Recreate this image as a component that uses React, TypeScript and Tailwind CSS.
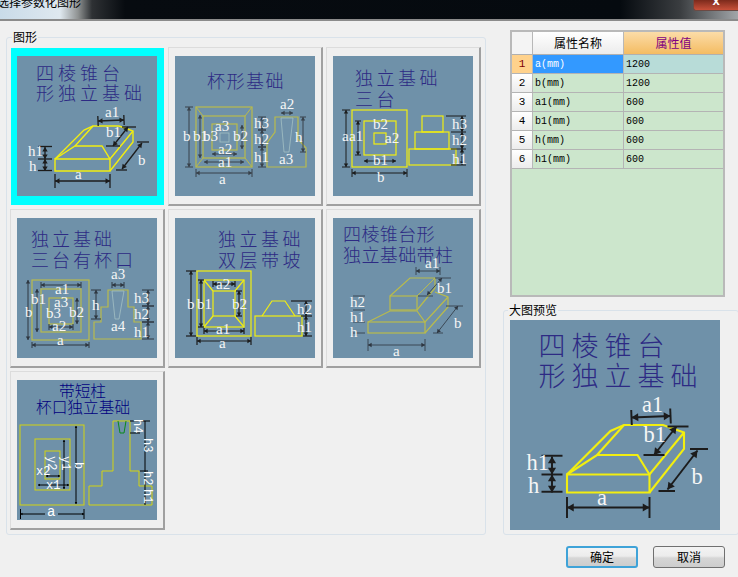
import React from "react";

type Pt = [number, number];

const Lb = ({ x, y, t, s = 15 }: { x: number; y: number; t: string; s?: number }) => (
  <text x={x} y={y} fontSize={s} fill="#f6f6f6" className="font-['Liberation_Serif',serif]">{t}</text>
);

const Ti = ({ x, y, t, adv, s = 18, c = "#2d2a84" }: { x: number; y: number; t: string; adv: number; s?: number; c?: string }) => (
  <text x={x} y={y} fontSize={s} fill={c} letterSpacing={adv - s} fontWeight={300} className="font-['Noto_Sans_CJK_SC',sans-serif]">{t}</text>
);

const Poly = ({ p, c, w = 1.2, fill = "none", open = false }: { p: Pt[]; c: string; w?: number; fill?: string; open?: boolean }) => {
  const pts = p.map((q) => q.join(",")).join(" ");
  return open ? <polyline points={pts} fill={fill} stroke={c} strokeWidth={w} /> : <polygon points={pts} fill={fill} stroke={c} strokeWidth={w} />;
};

const Box = ({ a, b, c, d, k, w = 1.2 }: { a: number; b: number; c: number; d: number; k: string; w?: number }) => (
  <rect x={a} y={b} width={c - a} height={d - b} fill="none" stroke={k} strokeWidth={w} />
);

const Ln = ({ a, b, c, d, k = "#1c1c1c", w = 1 }: { a: number; b: number; c: number; d: number; k?: string; w?: number }) => (
  <line x1={a} y1={b} x2={c} y2={d} stroke={k} strokeWidth={w} />
);

const Dim = ({ a, b, c, d, k = "#1c1c1c", w = 1, h = 3.6, ticks = 0 }: { a: number; b: number; c: number; d: number; k?: string; w?: number; h?: number; ticks?: number }) => {
  const len = Math.hypot(c - a, d - b) || 1;
  const ux = (c - a) / len;
  const uy = (d - b) / len;
  const nx = -uy;
  const ny = ux;
  const tri = (x: number, y: number, dx: number, dy: number) =>
    `${x},${y} ${x - dx * h + nx * h * 0.6},${y - dy * h + ny * h * 0.6} ${x - dx * h - nx * h * 0.6},${y - dy * h - ny * h * 0.6}`;
  return (
    <g>
      <line x1={a} y1={b} x2={c} y2={d} stroke={k} strokeWidth={w} />
      <polygon points={tri(a, b, -ux, -uy)} fill={k} />
      <polygon points={tri(c, d, ux, uy)} fill={k} />
      {ticks > 0 && (
        <>
          <line x1={a - nx * ticks} y1={b - ny * ticks} x2={a + nx * ticks} y2={b + ny * ticks} stroke={k} strokeWidth={w} />
          <line x1={c - nx * ticks} y1={d - ny * ticks} x2={c + nx * ticks} y2={d + ny * ticks} stroke={k} strokeWidth={w} />
        </>
      )}
    </g>
  );
};

const Y = "#f2ee10";
const OL = "#b9bb4c";
const PALE = "#a3c0c4";

const D1 = () => (
  <>
    <Ti x={19} y={24} t="四棱锥台" adv={22} />
    <Ti x={19} y={44} t="形独立基础" adv={22} />
    <Poly c={Y} w={1.4} p={[[38, 103], [93, 103], [93, 115], [38, 115]]} />
    <Poly c={Y} w={1.4} open p={[[38, 103], [67, 74], [76, 70], [102, 70], [116, 75], [116, 86], [93, 115]]} />
    <Poly c={Y} w={1.4} open p={[[38, 103], [58, 90], [85, 90], [93, 103], [116, 75]]} />
    <Ln k={Y} w={1.4} a={58} b={90} c={76} d={70} />
    <Dim a={38} b={125} c={93} d={125} ticks={7} w={1.3} h={4.5} />
    <Dim a={81} b={65} c={107} d={64} w={1.3} h={4.5} ticks={5} />
    <Dim a={96} b={90} c={111} d={71} w={1.3} h={4.5} />
    <Ln a={105} b={71} c={119} d={71} w={1.3} />
    <Ln a={89} b={90} c={103} d={90} w={1.3} />
    <Dim a={105} b={113} c={125} d={87} w={1.3} h={4.5} />
    <Ln a={99} b={114} c={110} d={114} w={1.3} />
    <Ln a={120} b={86} c={132} d={86} w={1.3} />
    <Dim a={28} b={91} c={28} d={103} w={1.3} h={4.5} />
    <Dim a={28} b={103} c={28} d={115} w={1.3} h={4.5} />
    <Ln a={21} b={90.5} c={35} d={90.5} w={1.3} />
    <Ln a={21} b={103} c={35} d={103} w={1.3} />
    <Ln a={21} b={114.5} c={35} d={114.5} w={1.3} />
    <Lb x={88} y={61} t="a1" />
    <Lb x={89} y={81} t="b1" />
    <Lb x={121} y={109} t="b" />
    <Lb x={11} y={100} t="h1" />
    <Lb x={12} y={115} t="h" />
    <Lb x={58} y={123} t="a" />
  </>
);

const D2 = () => (
  <>
    <Ti x={32} y={32} t="杯形基础" adv={19.5} />
    <Box a={21} b={51} c={77} d={111} k={OL} />
    <Box a={28} b={60} c={70} d={102} k={OL} />
    <Box a={37} b={68} c={62} d={94} k={OL} />
    <Box a={45} b={77} c={54} d={86} k={PALE} w={0.8} />
    <Ln k={OL} a={21} b={51} c={28} d={60} />
    <Ln k={OL} a={77} b={51} c={70} d={60} />
    <Ln k={OL} a={21} b={111} c={28} d={102} />
    <Ln k={OL} a={77} b={111} c={70} d={102} />
    <Poly c={OL} p={[[100, 61], [123, 61], [123, 83], [131, 92], [131, 111], [92, 111], [92, 87], [100, 76]]} />
    <Poly c={PALE} w={0.8} p={[[106, 62], [118, 62], [114, 96], [109, 96]]} />
    <Dim k="#38414a" a={14} b={51} c={14} d={111} ticks={4} />
    <Dim k="#38414a" a={25} b={59} c={25} d={102} />
    <Dim k="#38414a" a={21} b={117} c={77} d={117} ticks={4} />
    <Dim k="#38414a" a={29} b={106} c={69} d={106} />
    <Dim k="#38414a" a={37} b={98} c={62} d={98} />
    <Dim k="#38414a" a={67} b={69} c={67} d={93} />
    <Dim k="#38414a" a={87} b={61} c={87} d={74} ticks={4} />
    <Dim k="#38414a" a={87} b={74} c={87} d={91} ticks={4} />
    <Dim k="#38414a" a={87} b={91} c={87} d={111} ticks={4} />
    <Dim k="#38414a" a={128} b={61} c={128} d={96} ticks={3} />
    <Dim k="#38414a" a={106} b={57} c={118} d={57} />
    <Lb x={105} y={53} t="a2" />
    <Lb x={79} y={72} t="h3" />
    <Lb x={79} y={88} t="h2" />
    <Lb x={79} y={106} t="h1" />
    <Lb x={120} y={86} t="h" />
    <Lb x={104} y={108} t="a3" />
    <Lb x={44} y={128} t="a" />
    <Lb x={43} y={111} t="a1" />
    <Lb x={43} y={98} t="a2" />
    <Lb x={40} y={75} t="a3" />
    <Lb x={8} y={85} t="b" />
    <Lb x={18} y={85} t="b1" />
    <Lb x={28} y={85} t="b3" />
    <Lb x={58} y={85} t="b2" />
  </>
);

const D3 = () => (
  <>
    <Ti x={22} y={29} t="独立基础" adv={21.5} />
    <Ti x={22} y={50} t="三台" adv={21.5} />
    <Box a={19} b={54} c={74} d={111} k={Y} />
    <Box a={31} b={65} c={63} d={99} k={Y} />
    <Box a={41} b={77} c={53} d={88} k={Y} />
    <Box a={89} b={60} c={110} d={76} k={Y} />
    <Box a={82} b={76} c={116} d={93} k={Y} />
    <Box a={76} b={93} c={123} d={109} k={Y} />
    <Dim a={13} b={54} c={13} d={111} ticks={4} />
    <Dim a={25} b={65} c={25} d={99} ticks={3} />
    <Dim a={19} b={117} c={74} d={117} ticks={4} />
    <Dim a={31} b={105} c={63} d={105} />
    <Dim a={129} b={60} c={129} d={76} />
    <Dim a={129} b={76} c={129} d={93} />
    <Dim a={129} b={93} c={129} d={109} />
    <Ln a={113} b={60} c={133} d={60} />
    <Ln a={118} b={76} c={133} d={76} />
    <Ln a={118} b={93} c={133} d={93} />
    <Ln a={118} b={109} c={133} d={109} />
    <Lb x={9} y={85} t="a" />
    <Lb x={16} y={85} t="a1" />
    <Lb x={40} y={73} t="b2" />
    <Lb x={52} y={87} t="a2" />
    <Lb x={40} y={109} t="b1" />
    <Lb x={44} y={126} t="b" />
    <Lb x={119} y={73} t="h3" />
    <Lb x={119} y={89} t="h2" />
    <Lb x={119} y={108} t="h1" />
  </>
);

const D4 = () => (
  <>
    <Ti x={14} y={28} t="独立基础" adv={21} />
    <Ti x={14} y={49} t="三台有杯口" adv={21} />
    <Box a={15} b={62} c={72} d={122} k={OL} />
    <Box a={24} b={71} c={64} d={114} k={OL} />
    <Box a={32} b={80} c={56} d={106} k={OL} />
    <Poly c={OL} p={[[91, 72], [111, 72], [111, 89], [117, 89], [117, 104], [124, 104], [124, 121], [77, 121], [77, 104], [84, 104], [84, 89], [91, 89]]} />
    <Poly c={PALE} w={0.8} p={[[95, 73], [107, 73], [102, 101], [98, 101]]} />
    <Dim k="#2e3640" a={11} b={62} c={11} d={122} />
    <Dim k="#2e3640" a={20} b={71} c={20} d={114} />
    <Dim k="#2e3640" a={15} b={127} c={72} d={127} ticks={3} />
    <Dim k="#2e3640" a={24} b={67} c={64} d={67} ticks={3} />
    <Dim k="#2e3640" a={32} b={109} c={56} d={109} ticks={3} />
    <Dim k="#2e3640" a={60} b={80} c={60} d={106} />
    <Dim k="#2e3640" a={79} b={72} c={79} d={101} ticks={5} />
    <Dim k="#2e3640" a={95} b={67} c={107} d={67} ticks={3} />
    <Dim k="#2e3640" a={131} b={72} c={131} d={88} ticks={6} />
    <Dim k="#2e3640" a={131} b={88} c={131} d={104} ticks={6} />
    <Dim k="#2e3640" a={131} b={104} c={131} d={121} ticks={6} />
    <Lb x={94} y={61} t="a3" />
    <Lb x={117} y={85} t="h3" />
    <Lb x={117} y={101} t="h2" />
    <Lb x={117} y={119} t="h1" />
    <Lb x={75} y={92} t="h" />
    <Lb x={94} y={113} t="a4" />
    <Lb x={40} y={127} t="a" />
    <Lb x={38} y={76} t="a1" />
    <Lb x={37} y={89} t="a3" />
    <Lb x={14} y={86} t="b1" />
    <Lb x={8} y={99} t="b" />
    <Lb x={29} y={100} t="b3" />
    <Lb x={52} y={99} t="b2" />
    <Lb x={35} y={113} t="a2" />
  </>
);

const D5 = () => (
  <>
    <Ti x={43} y={28} t="独立基础" adv={21.5} />
    <Ti x={43} y={49} t="双层带坡" adv={21.5} />
    <Box a={22} b={53} c={76} d={118} k={Y} />
    <Box a={29} b={62} c={69} d={109} k={Y} />
    <Box a={38} b={73} c={60} d={98} k={Y} />
    <Ln k={Y} w={1.2} a={29} b={62} c={38} d={73} />
    <Ln k={Y} w={1.2} a={69} b={62} c={60} d={73} />
    <Ln k={Y} w={1.2} a={29} b={109} c={38} d={98} />
    <Ln k={Y} w={1.2} a={69} b={109} c={60} d={98} />
    <Box a={80} b={98} c={127} d={118} k={Y} />
    <Poly c={Y} open p={[[87, 98], [97, 83], [110, 83], [120, 98]]} />
    <Dim a={16} b={53} c={16} d={118} ticks={5} w={1.2} />
    <Dim a={26} b={62} c={26} d={109} ticks={3} w={1.2} />
    <Dim a={22} b={123} c={76} d={123} ticks={4} w={1.2} />
    <Dim a={29} b={113} c={69} d={113} ticks={3} w={1.2} />
    <Dim a={38} b={66} c={60} d={66} ticks={3} w={1.2} />
    <Dim a={64} b={73} c={64} d={98} ticks={3} w={1.2} />
    <Dim a={131} b={83} c={131} d={98} w={1.2} />
    <Dim a={131} b={98} c={131} d={118} w={1.2} />
    <Ln a={116} b={83} c={137} d={83} w={1.2} />
    <Ln a={126} b={98} c={137} d={98} w={1.2} />
    <Ln a={128} b={118} c={137} d={118} w={1.2} />
    <Lb x={12} y={91} t="b" />
    <Lb x={22} y={91} t="b1" />
    <Lb x={57} y={91} t="b2" />
    <Lb x={41} y={71} t="a2" />
    <Lb x={41} y={116} t="a1" />
    <Lb x={44} y={130} t="a" />
    <Lb x={122} y={96} t="h2" />
    <Lb x={122} y={114} t="h1" />
  </>
);

const D6 = () => (
  <>
    <Ti x={10} y={23} t="四棱锥台形" adv={18.4} />
    <Ti x={10} y={44} t="独立基础带柱" adv={18.4} />
    <Box a={35} b={104} c={92} d={115} k={OL} />
    <Poly c={OL} open p={[[92, 115], [115, 89], [115, 79], [102, 74]]} />
    <Poly c={OL} open p={[[35, 104], [57, 93], [84, 93], [92, 104], [115, 79]]} />
    <Box a={57} b={78} c={84} d={92} k={OL} />
    <Poly c={OL} open p={[[57, 78], [77, 60], [102, 60], [102, 70], [84, 92]]} />
    <Ln k={OL} a={84} b={78} c={102} d={60} />
    <Dim k="#2e3640" w={0.8} a={35} b={127} c={92} d={127} ticks={6} />
    <Dim k="#2e3640" w={0.8} a={83} b={53} c={107} d={53} ticks={4} />
    <Dim k="#2e3640" w={0.8} a={94} b={77} c={109} d={60} />
    <Dim k="#2e3640" w={0.8} a={104} b={115} c={125} d={88} />
    <Ln k="#2e3640" w={0.8} a={102} b={60} c={118} d={60} />
    <Ln k="#2e3640" w={0.8} a={85} b={78} c={100} d={78} />
    <Ln k="#2e3640" w={0.8} a={113} b={88} c={130} d={88} />
    <Ln k="#2e3640" w={0.8} a={100} b={115} c={110} d={115} />
    <Ln k="#2e3640" w={0.8} a={20} b={78} c={32} d={78} />
    <Ln k="#2e3640" w={0.8} a={20} b={92} c={32} d={92} />
    <Ln k="#2e3640" w={0.8} a={20} b={104} c={32} d={104} />
    <Ln k="#2e3640" w={0.8} a={20} b={115} c={32} d={115} />
    <Lb x={92} y={50} t="a1" />
    <Lb x={104} y={75} t="b1" />
    <Lb x={17} y={89} t="h2" />
    <Lb x={17} y={104} t="h1" />
    <Lb x={17} y={119} t="h" />
    <Lb x={121} y={110} t="b" />
    <Lb x={60} y={138} t="a" />
  </>
);

const RotLb = ({ x, y, t }: { x: number; y: number; t: string }) => (
  <text x={x} y={y} fontSize={12} fill="#fff" transform={`rotate(90 ${x} ${y})`} className="font-['Liberation_Mono',monospace]">{t}</text>
);

const HLb = ({ x, y, t, s = 12 }: { x: number; y: number; t: string; s?: number }) => (
  <text x={x} y={y} fontSize={s} fill="#fff" className="font-['Liberation_Mono',monospace]">{t}</text>
);

const D7 = () => {
  const G = "#d4d410";
  return (
    <>
      <Ti x={42} y={17} t="带短柱" adv={15.7} s={15.7} c="#00007f" />
      <Ti x={19} y={33} t="杯口独立基础" adv={15.7} s={15.7} c="#00007f" />
      <Box a={3} b={45} c={67} d={125} k={G} w={1} />
      <Box a={18} b={59} c={53} d={110} k={G} w={1} />
      <Box a={28} b={71} c={43} d={99} k={G} w={1} />
      <Poly c={G} w={1} p={[[96, 41], [113, 41], [113, 91], [122, 91], [122, 106], [135, 106], [135, 125], [72, 125], [72, 106], [85, 106], [85, 91], [96, 91]]} />
      <Poly c="#0a8a1a" w={1} open p={[[101, 41], [103, 53], [107, 53], [109, 41]]} />
      <Dim k="#000" a={59} b={46} c={59} d={124} h={2} />
      <Dim k="#000" a={47} b={60} c={47} d={109} h={2} />
      <Dim k="#000" a={3.5} b={134} c={67} d={134} h={2} ticks={5} />
      <Dim k="#000" a={21} b={105} c={52} d={105} h={2} />
      <Dim k="#000" a={29} b={96} c={43} d={96} h={2} />
      <Ln k="#000" a={128} b={41} c={128} d={125} />
      <Ln k="#000" a={113} b={41} c={133} d={41} />
      <Ln k="#000" a={113} b={53} c={123} d={53} />
      <Ln k="#000" a={123} b={91} c={131} d={91} />
      <rect x={28} y={129} width={13} height={9} fill="#6f91a9" />
      <HLb x={30} y={136} t="a" s={14} />
      <HLb x={29} y={109} t="x1" />
      <HLb x={19} y={95} t="x2" />
      <RotLb x={30.5} y={76} t="y2" />
      <RotLb x={44.5} y={76} t="y1" />
      <RotLb x={57.5} y={82} t="b" />
      <RotLb x={116.5} y={39} t="h4" />
      <RotLb x={126.5} y={58} t="h3" />
      <RotLb x={126.5} y={91} t="h2" />
      <RotLb x={126.5} y={109} t="h1" />
    </>
  );
};

const Pic = ({ children, large = false }: { children: React.ReactNode; large?: boolean }) => (
  <svg viewBox="0 0 140 140" className={large ? "block w-[210px] h-[210px] bg-[#6f91a9]" : "block w-[140px] h-[140px] bg-[#6f91a9]"}>
    {children}
  </svg>
);

const Tile = ({ children, selected = false }: { children: React.ReactNode; selected?: boolean }) => (
  <div
    className={
      selected
        ? "w-[155px] h-[159px] flex items-start justify-start pl-[6px] pt-[8px] bg-[#00ffff] border border-[#f0f0f0]"
        : "w-[155px] h-[159px] flex items-start justify-start pl-[6px] pt-[8px] bg-[#efefef] border border-[#dcdcdc] border-r-2 border-b-2 border-r-[#a0a0a0] border-b-[#a0a0a0]"
    }
  >
    <Pic>{children}</Pic>
  </div>
);

const rows = [
  ["1", "a(mm)", "1200"],
  ["2", "b(mm)", "1200"],
  ["3", "a1(mm)", "600"],
  ["4", "b1(mm)", "600"],
  ["5", "h(mm)", "600"],
  ["6", "h1(mm)", "600"],
];

export default function App() {
  return (
    <div className="w-[738px] h-[577px] overflow-hidden bg-[#f0f0f0] font-['Noto_Sans_CJK_SC',sans-serif] text-black">
      {/* Title bar */}
      <div className="relative h-[21px] overflow-hidden border-b-2 border-b-[#8b8b8b] bg-[linear-gradient(90deg,#c9dbe9_0px,#dfe8ef_60px,#8f9292_78px,#2e3134_92px,#070b10_125px,#050a0f_620px,#3a3d40_680px,#a2a6a9_738px)]">
        <div className="-mt-[6px] -ml-[3px] text-[12px] leading-[16px] whitespace-nowrap">选择参数化图形</div>
        <div className="absolute right-0 top-0 w-[45px] h-[11px] rounded-bl-[3px] border border-t-0 border-r-0 border-[#6b4a44] bg-[linear-gradient(180deg,#7c2a1c,#c8503a)] flex justify-center">
          <span className="-mt-[6px] text-[13px] leading-[14px] font-bold text-white font-['Liberation_Sans',sans-serif]">x</span>
        </div>
      </div>

      <div className="flex items-start">
        {/* Left group */}
        <div className="relative ml-[6px] mt-[16px] w-[480px] h-[498px] rounded-[3px] border border-[#d9e2ea] pl-[3px] pt-[9px]">
          <span className="absolute left-[5px] -top-[9px] bg-[#f0f0f0] px-px text-[12px] leading-[16px]">图形</span>
          <div className="grid grid-cols-[155px_155px_155px] auto-rows-[159px] gap-[3px]">
            <Tile selected><D1 /></Tile>
            <Tile><D2 /></Tile>
            <Tile><D3 /></Tile>
            <Tile><D4 /></Tile>
            <Tile><D5 /></Tile>
            <Tile><D6 /></Tile>
            <Tile><D7 /></Tile>
          </div>
        </div>

        {/* Right column */}
        <div className="ml-[17px] mt-[9px] w-[235px] shrink-0">
          <div className="ml-[7px] w-[215px] h-[267px] border-2 border-[#b9b9b9] bg-[#cce6cc] text-[10px]">
            <div className="flex h-[23px] text-[12px] border-b border-[#b0b0b0]">
              <div className="w-[21px] bg-[#f4f4f4] border-r border-[#b8b8b8]" />
              <div className="w-[91px] flex items-center justify-center bg-[linear-gradient(180deg,#ffffff,#ececec)] border-r border-[#b8b8b8]">属性名称</div>
              <div className="w-[99px] flex items-center justify-center bg-[linear-gradient(180deg,#fbdca8,#f4bc62)] text-[#800080]">属性值</div>
            </div>
            {rows.map((r, i) => (
              <div key={r[0]} className="flex h-[19px] border-b border-[#b4b4b4] w-[211px] font-['Liberation_Mono',monospace]">
                <div className={i === 0 ? "w-[21px] flex items-center justify-center bg-[#ffd28c] text-[#800000] border-r border-[#b8b8b8] text-[11px]" : "w-[21px] flex items-center justify-center bg-[linear-gradient(180deg,#ffffff,#ececec)] border-r border-[#b8b8b8] text-[11px]"}>{r[0]}</div>
                <div className={i === 0 ? "w-[91px] flex items-center pl-[2px] bg-[#3399ff] text-white border-r border-[#b8b8b8]" : "w-[91px] flex items-center pl-[2px] border-r border-[#b4b4b4]"}>{r[1]}</div>
                <div className={i === 0 ? "w-[99px] flex items-center pl-[2px] bg-[#b8dcd8]" : "w-[99px] flex items-center pl-[2px]"}>{r[2]}</div>
              </div>
            ))}
          </div>

          <div className="relative mt-[13px] w-[236px] h-[225px] rounded-[3px] border border-[#d9e2ea] pl-[6px] pt-[9px]">
            <span className="absolute left-[4px] -top-[9px] bg-[#f0f0f0] px-px text-[12px] leading-[16px]">大图预览</span>
            <Pic large><D1 /></Pic>
          </div>
        </div>
      </div>

      {/* Buttons */}
      <div className="mt-[11px] flex justify-end gap-[15px] pr-[13px]">
        <div className="w-[72px] h-[22px] flex items-center justify-center rounded-[3px] border-2 border-[#3fa3d8] bg-[linear-gradient(180deg,#f3f3f3_0%,#ececec_45%,#d6d6d6_55%,#cdcdcd_100%)] text-[12px]">确定</div>
        <div className="w-[72px] h-[22px] flex items-center justify-center rounded-[3px] border border-[#707070] bg-[linear-gradient(180deg,#f3f3f3_0%,#ececec_45%,#d6d6d6_55%,#cdcdcd_100%)] text-[12px]">取消</div>
      </div>
    </div>
  );
}
